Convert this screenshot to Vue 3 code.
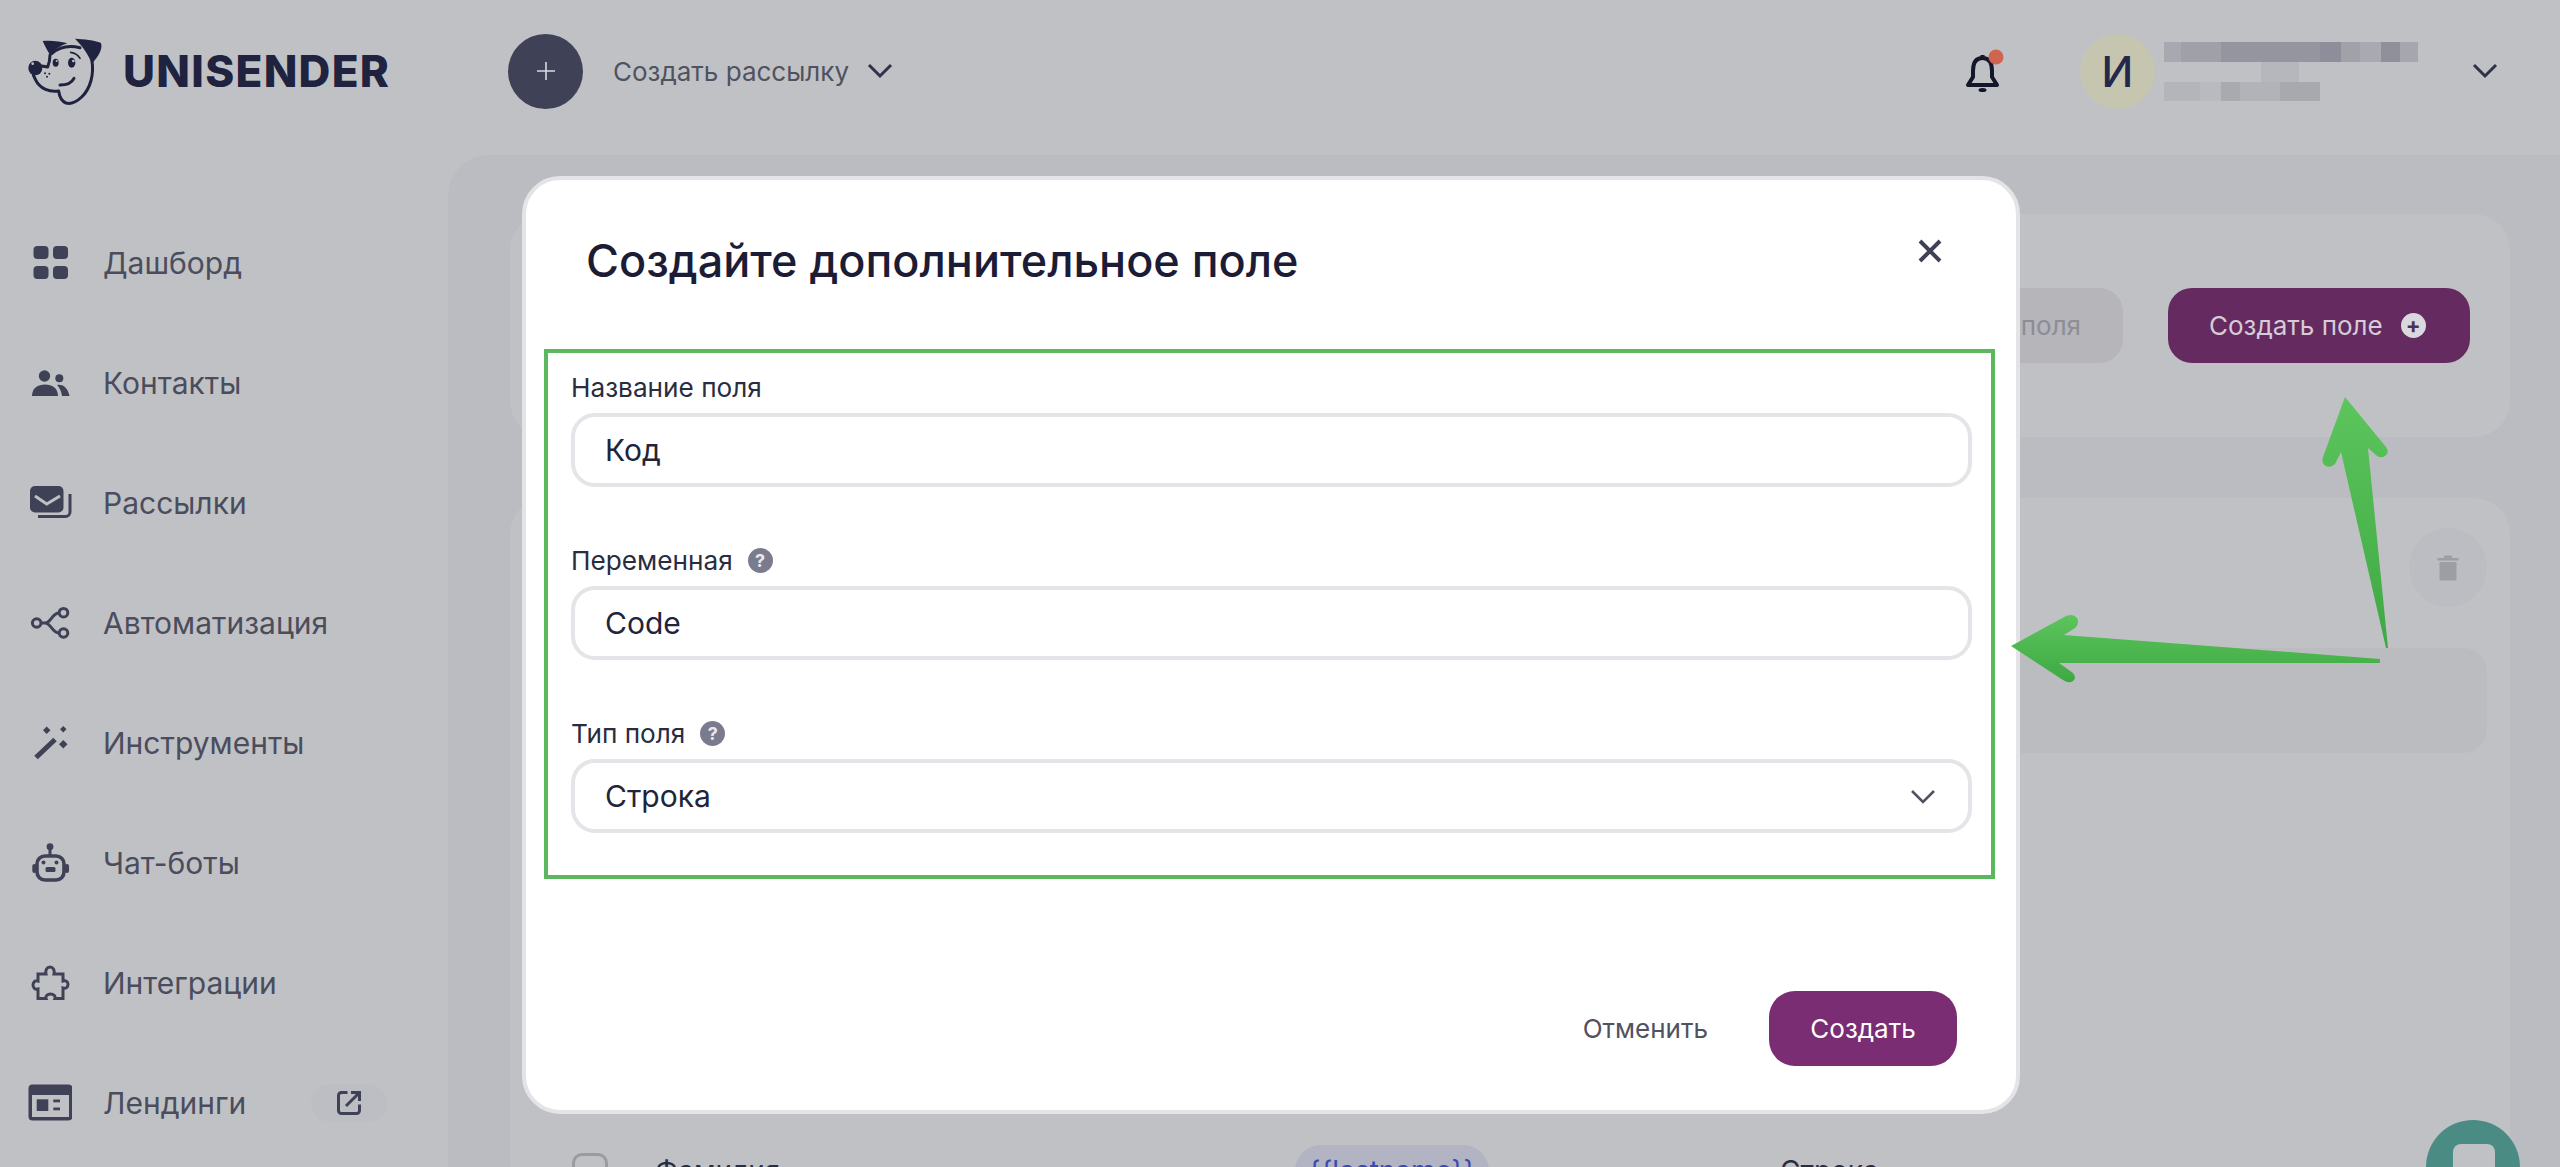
<template>
  <div class="page">
    <header class="topbar">
      <div class="logo">
        <svg class="dog" viewBox="0 0 390 300" width="130" height="100">
          <path d="M128 90 C150 88 180 90 202 97 C180 105 160 118 150 132 C142 118 134 104 128 90Z" fill="#20233f" />
          <path d="M225 83 C250 84 285 88 302 95 C310 108 298 135 275 158 C268 135 250 108 225 83Z" fill="#20233f" />
          <path d="M155 128 C175 110 205 102 240 110" class="dog-line" />
          <path d="M150 132 C150 145 148 155 143 168 L125 165" class="dog-line" />
          <path d="M276 150 C282 190 272 232 245 258 C230 272 212 280 198 276 C184 270 178 255 176 240 C150 244 120 235 106 205 L100 192" class="dog-line" />
          <ellipse cx="106" cy="171" rx="21" ry="22" fill="#20233f" />
          <circle cx="98" cy="158" r="4" fill="#c0c1c5" />
          <ellipse cx="167" cy="155" rx="9" ry="12" fill="#20233f" />
          <ellipse cx="215" cy="155" rx="11" ry="15" fill="#20233f" />
          <circle cx="170" cy="150" r="3" fill="#c0c1c5" />
          <circle cx="220" cy="150" r="4" fill="#c0c1c5" />
          <path d="M212 124 C225 126 235 133 240 142" class="dog-thin" />
          <path d="M180 222 C198 222 215 216 222 202" class="dog-line" />
          <circle cx="135" cy="187" r="3" fill="#20233f" />
          <circle cx="148" cy="188" r="3" fill="#20233f" />
          <circle cx="141" cy="197" r="3" fill="#20233f" />
        </svg>
        <span class="logo-text">UNISENDER</span>
      </div>

      <button class="plus-btn">
        <svg viewBox="0 0 24 24" width="24" height="24"><path d="M12 3V21M3 12H21" stroke="#d9dae0" stroke-width="1.6" fill="none" /></svg>
      </button>
      <span class="create-label">Создать рассылку</span>
      <svg class="chev" viewBox="0 0 26 16" width="26" height="16"><path d="M2 2L13 13L24 2" /></svg>

      <div class="user">
        <svg class="bell" viewBox="0 0 50 55" width="50" height="55">
          <path d="M23.5 15C16 15 14 21 14 28V34L9 42H38L33 34V28C33 21 31 15 23.5 15Z" fill="none" stroke="#14162a" stroke-width="4" stroke-linejoin="round" />
          <path d="M23.5 12V15" stroke="#14162a" stroke-width="4" />
          <ellipse cx="23.5" cy="47" rx="4" ry="2" fill="#14162a" />
          <circle cx="37" cy="14" r="7.5" fill="#cf6450" />
        </svg>
        <div class="avatar">И</div>
        <div class="mosaic">
          <div class="mosaic-row mosaic-top">
            <i v-for="(c, i) in mosaicTop" :key="i" :style="{ width: c[0] + 'px', background: c[1] }"></i>
          </div>
          <div class="mosaic-row mosaic-mid"><i></i></div>
          <div class="mosaic-row mosaic-bottom">
            <i v-for="(c, i) in mosaicBottom" :key="i" :style="{ width: c[0] + 'px', background: c[1] }"></i>
          </div>
        </div>
        <svg class="chev user-chev" viewBox="0 0 26 16" width="26" height="16"><path d="M2 2L13 13L24 2" /></svg>
      </div>
    </header>

    <div class="layout">
      <nav class="sidebar">
        <a class="nav-item">
          <svg class="nav-icon" viewBox="0 0 44 44">
            <rect x="5.5" y="5" width="15" height="13" rx="4" />
            <rect x="25" y="5" width="15" height="13" rx="4" />
            <rect x="5.5" y="25" width="15" height="13" rx="4" />
            <rect x="25" y="25" width="15" height="13" rx="4" />
          </svg>
          Дашборд
        </a>
        <a class="nav-item">
          <svg class="nav-icon" viewBox="0 0 44 44">
            <circle cx="16.5" cy="15" r="5.7" />
            <circle cx="31.3" cy="17.3" r="4" />
            <path d="M4 35C4 27 10 23.5 17 23.5C24 23.5 30 27 30 35Z" />
            <path d="M29 24C36 23 40 28 41.5 35H34C33.5 31 32 27 29 24Z" />
          </svg>
          Контакты
        </a>
        <a class="nav-item">
          <svg class="nav-icon" viewBox="0 0 44 44">
            <rect x="2" y="5" width="33.5" height="26.5" rx="5" />
            <path d="M7 15L18.7 23L32 15" class="cut" />
            <path d="M42 13V31A4.5 4.5 0 0 1 37.5 35.5H10" class="line" />
          </svg>
          Рассылки
        </a>
        <a class="nav-item">
          <svg class="nav-icon" viewBox="0 0 44 44">
            <circle cx="8.7" cy="22" r="4.3" class="line" />
            <circle cx="35.5" cy="11.7" r="4.3" class="line" />
            <circle cx="35.5" cy="32" r="4.3" class="line" />
            <path d="M13 22H17C23 22 24 12 31 12M17 22C23 22 24 32 31 32" class="line" />
          </svg>
          Автоматизация
        </a>
        <a class="nav-item">
          <svg class="nav-icon" viewBox="0 0 44 44">
            <path d="M8 36.5L27 18.5" class="line wand" />
            <path d="M18.7 5.5L22.5 9.3L18.7 13L15 9.3ZM35.3 5L38.5 8.3L35.3 11.5L32 8.3ZM35.3 19L39.5 23.3L35.3 27.5L31 23.3Z" />
          </svg>
          Инструменты
        </a>
        <a class="nav-item">
          <svg class="nav-icon" viewBox="0 0 44 44">
            <circle cx="22" cy="5.7" r="3.4" />
            <path d="M22 8V15" class="line" />
            <rect x="9" y="15" width="27" height="24" rx="8" class="line thick" />
            <rect x="4.3" y="23" width="4" height="9" rx="2" />
            <rect x="37" y="23" width="4" height="9" rx="2" />
            <circle cx="15.5" cy="21.5" r="2" />
            <circle cx="28.5" cy="21.5" r="2" />
            <rect x="17.5" y="26" width="10" height="5" rx="1.5" />
          </svg>
          Чат-боты
        </a>
        <a class="nav-item">
          <svg class="nav-icon" viewBox="0 0 44 44">
            <path d="M10 13H18C17 9 19 6 22 6C25 6 27 9 26 13H35V20C38 19 40 21 40 23.5C40 26 38 28 35 27V37.5H27C28 35 25.5 33 22.5 33C19.5 33 17 35 18 37.5H10V28C7 29 5 26.5 5 24C5 21.5 7 19 10 20Z" class="line" />
          </svg>
          Интеграции
        </a>
        <a class="nav-item">
          <svg class="nav-icon" viewBox="0 0 44 44">
            <rect x="0.5" y="3.5" width="44" height="36" rx="4" />
            <rect x="4" y="14" width="37" height="22" class="cut-fill" />
            <rect x="8.7" y="18.3" width="11.6" height="11.7" />
            <rect x="25.3" y="18.5" width="6.7" height="2.8" />
            <rect x="25.3" y="26.5" width="6.7" height="2.8" />
          </svg>
          Лендинги
          <span class="external">
            <svg viewBox="0 0 24 24" width="24" height="24">
              <path d="M10.5 1.5H4.5A3 3 0 0 0 1.5 4.5V19.5A3 3 0 0 0 4.5 22.5H19.5A3 3 0 0 0 22.5 19.5V13.5M9 15L22 2M14 1.5H22.5V10" fill="none" stroke="#3f4256" stroke-width="3" />
            </svg>
          </span>
        </a>
      </nav>

      <main class="content">
        <section class="card card-actions">
          <button class="btn-muted">поля</button>
          <button class="btn-create">
            Создать поле
            <span class="btn-plus">+</span>
          </button>
        </section>

        <section class="card card-list">
          <div class="trash-row">
            <button class="trash-btn">
              <svg viewBox="0 0 22 26" width="22" height="26" fill="#9d9ea5">
                <rect x="0.5" y="3" width="21" height="2.5" />
                <rect x="7" y="0.5" width="8" height="3" rx="1" />
                <path d="M2.5 7H19.5V24A1.5 1.5 0 0 1 18 25.5H4A1.5 1.5 0 0 1 2.5 24Z" />
              </svg>
            </button>
          </div>
          <div class="list-bar"></div>
          <div class="list-row">
            <span class="checkbox"></span>
            <span class="cell">Фамилия</span>
            <span class="tag">{{ tagText }}</span>
            <span class="cell">Строка</span>
          </div>
        </section>
      </main>
    </div>

    <button class="chat-btn"><i></i></button>

    <div class="modal">
      <div class="modal-head">
        <h2 class="modal-title">Создайте дополнительное поле</h2>
        <button class="modal-close">
          <svg viewBox="0 0 26 26" width="26" height="26"><path d="M3 3L23 23M23 3L3 23" stroke="#3f4256" stroke-width="4" fill="none" /></svg>
        </button>
      </div>

      <div class="form-area">
        <div class="field">
          <label class="field-label">Название поля</label>
          <input v-model="form.name" class="field-input" type="text" />
        </div>
        <div class="field">
          <label class="field-label">Переменная <span class="help">?</span></label>
          <input v-model="form.variable" class="field-input" type="text" />
        </div>
        <div class="field">
          <label class="field-label">Тип поля <span class="help">?</span></label>
          <div class="select-wrap">
            <select v-model="form.type" class="field-input field-select">
              <option value="string">Строка</option>
              <option value="number">Число</option>
            </select>
            <svg class="select-chev" viewBox="0 0 26 16" width="26" height="16"><path d="M2 2L13 13L24 2" /></svg>
          </div>
        </div>
      </div>

      <div class="modal-actions">
        <button class="btn-cancel">Отменить</button>
        <button class="btn-submit">Создать</button>
      </div>
    </div>

    <svg class="arrows" viewBox="0 0 2560 1167" width="2560" height="1167">
      <defs>
        <linearGradient id="arrowGreen" x1="0" y1="0" x2="0" y2="1">
          <stop offset="0" stop-color="#5cc55c" />
          <stop offset="1" stop-color="#3ea843" />
        </linearGradient>
      </defs>
      <path fill="url(#arrowGreen)" d="M2345 397L2386 447Q2390 453 2385 456Q2380 459 2376 455L2368 448L2388 648L2386 648L2341 452L2335 464Q2331 468 2326 466Q2321 463 2323 457Z" />
      <path fill="url(#arrowGreen)" d="M2011 646L2066 616Q2073 613 2077 618Q2080 624 2075 628L2064 635L2380 659L2380 663L2059 663L2073 673Q2077 678 2073 681Q2069 684 2063 680Z" />
    </svg>
  </div>
</template>

<script setup>
import { ref } from 'vue'

const form = ref({ name: 'Код', variable: 'Code', type: 'string' })
const tagText = '{{lastname}}'

// name and email are pixelated in the shot
const mosaicTop = [
  [17, '#a8a9b0'], [40, '#9fa0a8'], [99, '#94959e'], [21, '#8d8e99'],
  [19, '#a0a1a9'], [21, '#a9aab1'], [19, '#8f9099'], [18, '#a5a6ae'],
]
const mosaicBottom = [
  [36, '#b4b5ba'], [21, '#b9babf'], [19, '#a9aab0'], [40, '#b2b3b9'], [40, '#a8a9af'],
]
</script>

<style>
html, body { margin: 0; background: #c0c1c5; }
</style>

<style scoped>
.page {
  position: relative;
  width: 2560px;
  height: 1167px;
  overflow: hidden;
  display: flex;
  flex-direction: column;
  background: #c0c1c5;
  font-family: Inter, "Liberation Sans", sans-serif;
  color: #4b4d5d;
}

button { font-family: inherit; border: none; cursor: pointer; }

.topbar {
  height: 142px;
  margin-bottom: 13px;
  flex-shrink: 0;
  display: flex;
  align-items: center;
}
.logo { width: 508px; display: flex; align-items: center; height: 100px; }
.dog { flex-shrink: 0; margin: -20px 0 0 0; }
.dog-line { fill: none; stroke: #20233f; stroke-width: 9; stroke-linecap: round; stroke-linejoin: round; }
.dog-thin { fill: none; stroke: #20233f; stroke-width: 5; stroke-linecap: round; }
.logo-text {
  margin-left: -7px;
  font-size: 44px;
  font-weight: 800;
  color: #20233f;
  letter-spacing: 1.3px;
}

.plus-btn {
  width: 75px;
  height: 75px;
  border-radius: 50%;
  background: #3f4256;
  display: flex;
  align-items: center;
  justify-content: center;
  padding: 0;
}
.create-label { margin-left: 30px; font-size: 26px; color: #50525f; }
.chev { fill: none; stroke: #2f3246; stroke-width: 3; margin-left: 18px; }

.user { margin-left: auto; padding-right: 62px; display: flex; align-items: center; }
.bell { display: block; margin-top: -2px; }
.avatar {
  width: 75px;
  height: 75px;
  margin-left: 71px;
  border-radius: 50%;
  background: #c6c6b0;
  color: #25284a;
  font-size: 42px;
  font-weight: 500;
  display: flex;
  align-items: center;
  justify-content: center;
}
.mosaic { margin-left: 9px; width: 254px; }
.mosaic-row { display: flex; height: 20px; }
.mosaic-row i { display: block; height: 100%; }
.mosaic-mid { height: 20px; padding-left: 97px; }
.mosaic-mid i { width: 38px; background: #b6b7bc; }
.mosaic-bottom { height: 19px; }
.user-chev { margin-left: 54px; }

.layout { flex: 1; min-height: 0; display: flex; }

.sidebar { width: 448px; flex-shrink: 0; padding-top: 48px; box-sizing: border-box; }
.nav-item {
  height: 120px;
  padding-left: 28px;
  display: flex;
  align-items: center;
  font-size: 30px;
  color: #4b4d5d;
}
.nav-icon { width: 44px; height: 44px; margin-right: 31px; fill: #3f4256; flex-shrink: 0; }
.nav-icon .line { fill: none; stroke: #3f4256; stroke-width: 3; }
.nav-icon .thick { stroke-width: 3.6; }
.nav-icon .wand { stroke-width: 5; }
.nav-icon .cut { fill: none; stroke: #c0c1c5; stroke-width: 3; }
.nav-icon .cut-fill { fill: #c0c1c5; }
.external {
  width: 76px;
  height: 38px;
  margin-left: 65px;
  border-radius: 19px;
  background: #bdbec3;
  display: flex;
  align-items: center;
  justify-content: center;
}

.content {
  flex: 1;
  min-width: 0;
  padding: 59px 50px 0 62px;
  background: #bbbcc1;
  border-top-left-radius: 40px;
  display: flex;
  flex-direction: column;
  gap: 61px;
}
.card { background: #c0c1c5; border-radius: 36px; flex-shrink: 0; box-sizing: border-box; }
.card-actions {
  height: 223px;
  padding: 74px 40px 0 0;
  display: flex;
  justify-content: flex-end;
  align-items: flex-start;
  gap: 45px;
}
.btn-muted {
  height: 75px;
  padding: 0 42px 0 300px;
  border-radius: 24px;
  background: #b5b5ba;
  color: #8c8d96;
  font-size: 26px;
}
.btn-create {
  width: 302px;
  height: 75px;
  padding: 0 0 0 41px;
  border-radius: 24px;
  background: #652b60;
  color: #d6ccd8;
  font-size: 26px;
  display: flex;
  align-items: center;
  gap: 18px;
}
.btn-plus {
  width: 25px;
  height: 25px;
  border-radius: 50%;
  background: #d8d8de;
  color: #4d3350;
  font-size: 22px;
  font-weight: 700;
  line-height: 25px;
  text-align: center;
}

.card-list { padding: 30px 23px 0 62px; }
.trash-row { display: flex; justify-content: flex-end; }
.trash-btn {
  width: 78px;
  height: 79px;
  border-radius: 50%;
  background: #bcbdc2;
  display: flex;
  align-items: center;
  justify-content: center;
  padding: 0;
}
.list-bar { height: 105px; margin-top: 41px; background: #bbbcc0; border-radius: 24px; }
.list-row {
  margin-top: 392px;
  display: grid;
  grid-template-columns: 83px 640px 485px 1fr;
  align-items: center;
  font-size: 28px;
  color: #2a2c40;
}
.checkbox { width: 36px; height: 36px; box-sizing: border-box; border: 3px solid #9a9ba1; border-radius: 10px; }
.tag {
  width: 194px;
  height: 52px;
  border-radius: 26px;
  background: #b2b3c3;
  color: #3b4ab0;
  font-size: 28px;
  display: flex;
  align-items: center;
  justify-content: center;
}

.chat-btn {
  position: absolute;
  left: 2426px;
  top: 1120px;
  width: 94px;
  height: 94px;
  padding: 0;
  border-radius: 50%;
  background: #4a8c84;
}
.chat-btn i {
  position: absolute;
  left: 27px;
  top: 24px;
  width: 42px;
  height: 42px;
  border-radius: 8px;
  background: #c0c1c5;
}

.modal {
  position: absolute;
  left: 522px;
  top: 176px;
  width: 1498px;
  height: 938px;
  box-sizing: border-box;
  border: 4px solid #e3e3e8;
  border-radius: 38px;
  background: #fff;
  display: flex;
  flex-direction: column;
}
.modal-head {
  height: 169px;
  flex-shrink: 0;
  padding: 0 73px 0 60px;
  display: flex;
  align-items: flex-start;
  justify-content: space-between;
}
.modal-title {
  margin: 53px 0 0;
  font-size: 45px;
  line-height: 56px;
  font-weight: 500;
  color: #1c1c36;
}
.modal-close { margin-top: 58px; padding: 0; background: none; display: block; height: 26px; }

.form-area {
  height: 530px;
  box-sizing: border-box;
  margin: 0 21px 0 18px;
  padding: 19px 19px 0 23px;
  border: 4px solid #5cb85c;
  display: flex;
  flex-direction: column;
  gap: 58px;
  flex-shrink: 0;
}
.field-label {
  height: 30px;
  margin-bottom: 11px;
  display: flex;
  align-items: center;
  gap: 15px;
  font-size: 26.2px;
  color: #2a2c3f;
}
.help {
  width: 25px;
  height: 25px;
  border-radius: 50%;
  background: #7b7b8e;
  color: #e8e8ee;
  font-size: 18px;
  font-weight: 700;
  line-height: 25px;
  text-align: center;
}
.field-input {
  display: block;
  width: 100%;
  height: 74px;
  box-sizing: border-box;
  padding: 0 30px;
  border: 4px solid #e4e4e9;
  border-radius: 24px;
  background: #fff;
  font-family: inherit;
  font-size: 30px;
  color: #22243a;
  outline: none;
}
.select-wrap { position: relative; }
.field-select { appearance: none; -webkit-appearance: none; }
.select-chev {
  position: absolute;
  right: 36px;
  top: 30px;
  fill: none;
  stroke: #50525f;
  stroke-width: 2.6;
  pointer-events: none;
}

.modal-actions {
  margin-top: auto;
  padding: 0 59px 44px 0;
  display: flex;
  justify-content: flex-end;
  align-items: center;
  gap: 61px;
}
.btn-cancel { padding: 0; background: none; color: #50525f; font-size: 26px; }
.btn-submit {
  width: 188px;
  height: 75px;
  padding: 0;
  border-radius: 26px;
  background: #7b2d73;
  color: #fff;
  font-size: 26px;
}

.arrows { position: absolute; left: 0; top: 0; pointer-events: none; }
</style>
